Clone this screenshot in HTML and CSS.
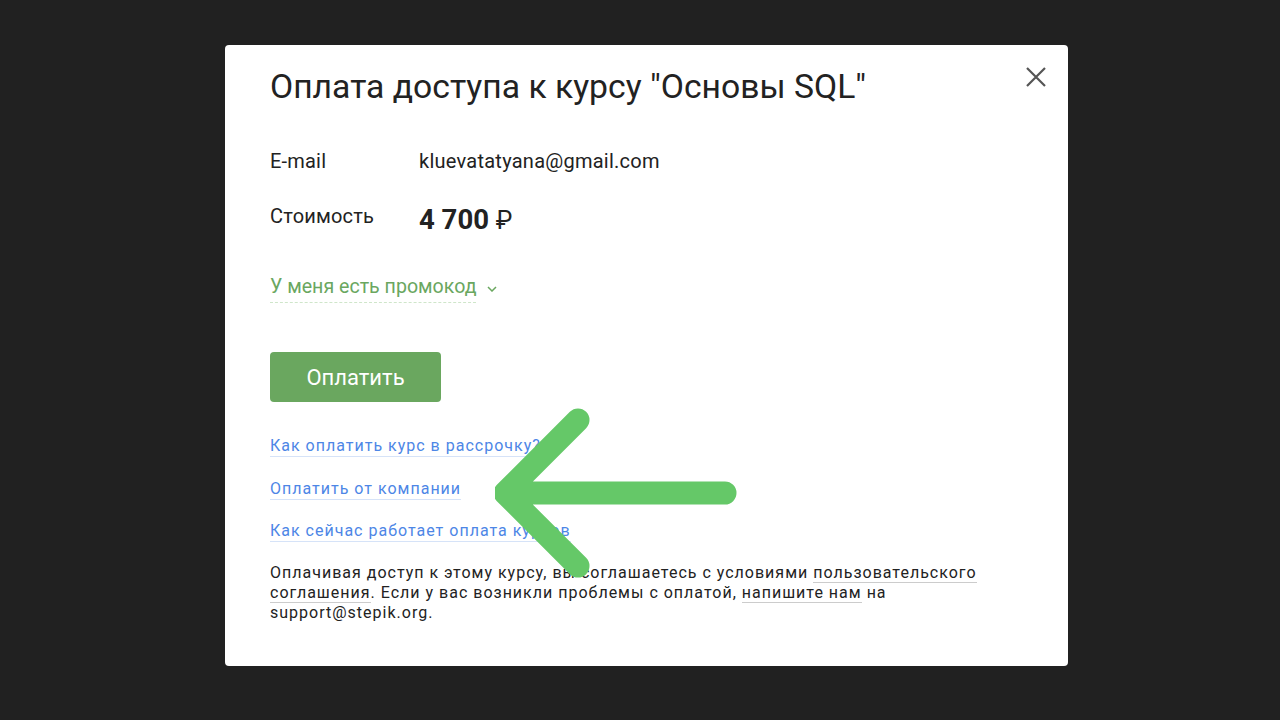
FILE: index.html
```html
<!DOCTYPE html>
<html lang="ru">
<head>
<meta charset="utf-8">
<link rel="stylesheet" href="styles.css">
</head>
<body>
<div class="backdrop">
  <div class="modal">
    <button class="close" aria-label="Закрыть">
      <svg width="20" height="20" viewBox="0 0 20 20"><path d="M1 1L19 19M19 1L1 19" stroke="#555" stroke-width="2.2" fill="none"/></svg>
    </button>
    <h1 class="title">Оплата доступа к курсу "Основы SQL"</h1>
    <div class="row row-email">
      <div class="label">E-mail</div>
      <div class="value">kluevatatyana@gmail.com</div>
    </div>
    <div class="row row-price">
      <div class="label">Стоимость</div>
      <div class="price">4 700 <span class="rub">₽</span></div>
    </div>
    <div class="promo">
      <span class="promo-link">У меня есть промокод</span>
      <svg class="chev" width="10" height="6" viewBox="0 0 10 6"><path d="M1 1l4 4 4-4" stroke="#6aa75f" stroke-width="1.5" fill="none"/></svg>
    </div>
    <button class="pay">Оплатить</button>
    <div class="links">
      <a class="link">Как оплатить курс в рассрочку?</a>
      <a class="link">Оплатить от компании</a>
      <a class="link">Как сейчас работает оплата курсов</a>
    </div>
    <p class="note">Оплачивая доступ к этому курсу, вы соглашаетесь с условиями <a class="ulink">пользовательского соглашения</a>. Если у вас возникли проблемы с оплатой, <a class="ulink">напишите нам</a> на support@stepik.org.</p>
    <svg class="arrow" width="260" height="180" viewBox="0 0 260 180"><path d="M83 16L10 89L83 162M10 89H230" stroke="#65c868" stroke-width="23" stroke-linecap="round" stroke-linejoin="round" fill="none"/></svg>
  </div>
</div>
</body>
</html>
```
FILE: styles.css
```css
* { box-sizing: border-box; }
html, body { margin: 0; padding: 0; }
body {
  background: #212121;
  font-family: Roboto, "Noto Sans", sans-serif;
  width: 1280px;
  height: 720px;
  overflow: hidden;
}
.backdrop {
  padding-top: 45px;
  display: flex;
  justify-content: center;
}
.modal {
  position: relative;
  width: 843px;
  height: 621px;
  margin-left: 13px;
  background: #fff;
  border-radius: 4px;
  padding: 22px 45px 0 45px;
  color: #222;
}
.close {
  position: absolute;
  top: 22px;
  right: 22px;
  background: none;
  border: 0;
  padding: 0;
  width: 20px;
  height: 20px;
}
.close svg { display: block; }
.title {
  margin: 0;
  font-size: 33.7px;
  font-weight: 400;
  line-height: 40px;
  color: #222;
}
.row {
  display: flex;
  align-items: flex-start;
}
.label {
  width: 149px;
  font-size: 20px;
  line-height: 24px;
  letter-spacing: 0.2px;
}
.row-email { margin-top: 42px; }
.value {
  font-size: 20px;
  line-height: 24px;
  letter-spacing: 0.25px;
}
.row-price { margin-top: 31px; }
.price {
  font-size: 27.5px;
  line-height: 32px;
  font-weight: 700;
}
.rub { font-weight: 400; font-size: 25px; }
.promo {
  margin-top: 38px;
  display: flex;
  align-items: flex-start;
  gap: 11px;
}
.promo-link {
  font-size: 19.6px;
  color: #6aa75f;
  border-bottom: 1px dashed #cfe6ca;
  line-height: 24px;
  padding-bottom: 3px;
}
.chev { margin-top: 11px; }
.pay {
  display: block;
  margin-top: 49px;
  width: 171px;
  height: 50px;
  background: #6aa75f;
  border: 0;
  border-radius: 4px;
  color: #fff;
  font-family: inherit;
  font-size: 22px;
}
.links {
  margin-top: 34px;
  display: flex;
  flex-direction: column;
  align-items: flex-start;
  gap: 21.5px;
}
.link {
  font-size: 16px;
  letter-spacing: 1px;
  color: #4d86e6;
  line-height: 19px;
  border-bottom: 1px solid #d6e3f8;
  padding-bottom: 1px;
}
.note {
  margin: 21px 0 0 0;
  font-size: 16px;
  line-height: 20px;
  letter-spacing: 1px;
  color: #222;
}
.ulink {
  border-bottom: 1px solid #ccc;
}
.arrow {
  position: absolute;
  left: 270px;
  top: 359px;
}
```
